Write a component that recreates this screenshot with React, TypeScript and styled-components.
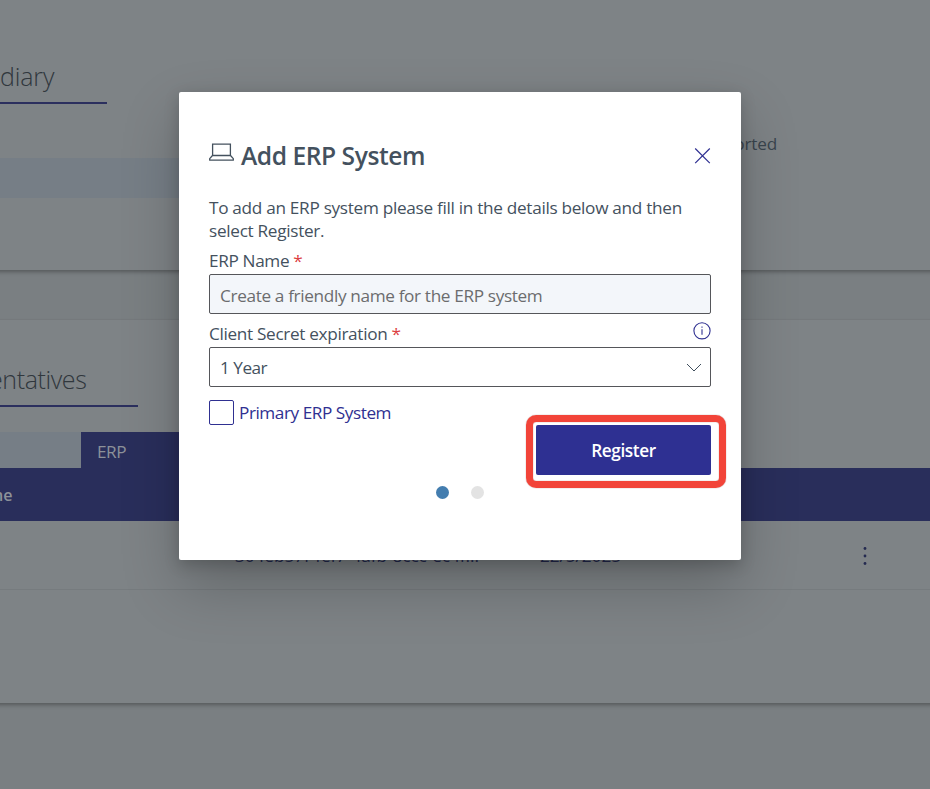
import React from "react";
import styled, { createGlobalStyle } from "styled-components";

const GlobalStyle = createGlobalStyle`
  *, *::before, *::after { box-sizing: border-box; }
  body {
    margin: 0;
    overflow: hidden;
    background: #7a7f82;
    color: #44515e;
    font-family: "Open Sans", "Noto Sans", sans-serif;
    font-size: 17.2px;
  }
`;

const Page = styled.div`
  position: relative;
  width: 930px;
  height: 789px;
  overflow: hidden;
  background: #7a7f82;
`;

const Card = styled.section<{ $height: number; $gap?: number; $border?: boolean }>`
  height: ${(p) => p.$height}px;
  margin: 0 -10px ${(p) => p.$gap ?? 0}px;
  padding: 0 10px;
  background: #7e8386;
  border-top: ${(p) => (p.$border ? "1px solid #75797c" : "0")};
  box-shadow: 0 3px 4px -1px rgba(0, 0, 0, 0.3);
`;

const SectionTitle = styled.h2<{ $width: number; $top: number; $shift?: number; $track: number }>`
  width: ${(p) => p.$width}px;
  height: 44px;
  margin: ${(p) => p.$top}px 0 0;
  text-indent: ${(p) => p.$shift ?? 0}px;
  border-bottom: 2px solid #2b2f5e;
  color: #30373d;
  font-size: 25px;
  font-weight: 300;
  line-height: 32px;
  letter-spacing: ${(p) => p.$track}px;
  white-space: nowrap;
`;

const TitleWrap = styled.div`
  display: flow-root;
`;

const Columns = styled.div`
  display: grid;
  grid-template-columns: 200px 1fr;
  padding-top: 25px;
`;

const Strip = styled.div`
  height: 40px;
  margin-top: 29px;
  background: #767e86;
`;

const ImportState = styled.div`
  justify-self: start;
  width: 577px;
  padding-top: 3px;
  line-height: 24px;
  text-align: right;
  color: #3a454e;
  letter-spacing: -0.2px;
`;

const Tabs = styled.div`
  display: flex;
  height: 36px;
  margin-top: 25px;
`;

const Tab = styled.div<{ $active?: boolean; $width: number }>`
  width: ${(p) => p.$width}px;
  padding-left: 16px;
  line-height: 39px;
  background: ${(p) => (p.$active ? "#292e5b" : "#767e86")};
  color: #8c9199;
  letter-spacing: -0.5px;
`;

const TableHead = styled.div`
  height: 53px;
  background: #292e5b;
  color: #8d9299;
  font-size: 16px;
  font-weight: 600;
  line-height: 54px;
  text-indent: -12px;
`;

const TableRow = styled.div`
  display: grid;
  grid-template-columns: 235px 305px 310px 1fr;
  height: 69px;
  padding-top: 22px;
  border-bottom: 1px solid #767b7e;
  color: #242a50;
  line-height: 25px;
  letter-spacing: -0.05px;
`;

const RowMenu = styled.svg`
  width: 30px;
  height: 24px;
`;

const Dialog = styled.div`
  position: absolute;
  left: 179px;
  top: 92px;
  width: 562px;
  height: 468px;
  padding: 47px 30px 0;
  border-radius: 2px;
  background: #fff;
  box-shadow: 0 25.6px 57.6px rgba(0, 0, 0, 0.22), 0 4.8px 14.4px rgba(0, 0, 0, 0.18);
`;

const DialogHeader = styled.header`
  display: flex;
  height: 32px;
`;

const DialogTitle = styled.h1`
  flex: 1;
  margin: 0 0 0 7px;
  font-size: 24.6px;
  font-weight: 600;
  line-height: 33px;
  letter-spacing: -0.45px;
`;

const LaptopIcon = styled.svg`
  width: 25px;
  height: 20px;
  margin-top: 3px;
`;

const CloseIcon = styled.svg`
  width: 17px;
  height: 17px;
  margin-top: 8px;
`;

const Intro = styled.p`
  margin: 25px 0 0;
  line-height: 23px;
  letter-spacing: -0.3px;
  white-space: nowrap;
`;

const LabelRow = styled.div<{ $top: number; $track: number }>`
  display: flex;
  justify-content: space-between;
  height: 24px;
  margin-top: ${(p) => p.$top}px;
  line-height: 24px;
  letter-spacing: ${(p) => p.$track}px;
`;

const Required = styled.span`
  color: #dc3e42;
`;

const Field = styled.div<{ $filled?: boolean }>`
  display: flex;
  justify-content: space-between;
  height: 40px;
  margin-top: 1px;
  padding: 0 8px 0 10px;
  border: 1px solid #55565a;
  border-radius: 2px;
  background: ${(p) => (p.$filled ? "#f3f6fa" : "#fff")};
  color: ${(p) => (p.$filled ? "#6b6c6e" : "#44515e")};
  line-height: ${(p) => (p.$filled ? 41 : 39)}px;
  letter-spacing: ${(p) => (p.$filled ? -0.35 : -0.5)}px;
`;

const InfoIcon = styled.svg`
  width: 18px;
  height: 18px;
`;

const Chevron = styled.svg`
  width: 16px;
  height: 9px;
  margin-top: 15px;
`;

const CheckRow = styled.label`
  display: flex;
  align-items: center;
  gap: 5px;
  height: 25px;
  margin-top: 13px;
  color: #2f3091;
  letter-spacing: -0.45px;
`;

const CheckBox = styled.span`
  width: 25px;
  height: 25px;
  border: 1px solid #2f3091;
  border-radius: 2px;
`;

const Actions = styled.div`
  display: flex;
  justify-content: flex-end;
`;

const RegisterButton = styled.button`
  position: relative;
  width: 175px;
  height: 50px;
  padding: 1px 0 0;
  border: 0;
  border-radius: 2px;
  background: #2e3092;
  color: #fff;
  font: 600 17.2px "Open Sans", "Noto Sans", sans-serif;
  letter-spacing: -0.4px;

  &::after {
    content: "";
    position: absolute;
    inset: -10px -15px -13px -10px;
    border: 7px solid #f24439;
    border-radius: 10px;
    box-shadow: 0 0 1px #8f5a58, inset 0 0 1px #8f5a58;
  }
`;

const Steps = styled.div`
  display: flex;
  justify-content: center;
  gap: 22px;
  margin-top: 11px;
`;

const Step = styled.span<{ $active?: boolean }>`
  width: 13px;
  height: 13px;
  border-radius: 50%;
  background: ${(p) => (p.$active ? "#437daf" : "#e3e3e3")};
`;

export default function App() {
  return (
    <>
      <GlobalStyle />
      <Page>
        <Card $height={270} $gap={49}>
          <TitleWrap>
            <SectionTitle $width={107} $top={60} $track={-0.15}>diary</SectionTitle>
          </TitleWrap>
          <Columns>
            <Strip />
            <ImportState>Imported</ImportState>
          </Columns>
        </Card>
        <Card $height={384} $border>
          <TitleWrap>
            <SectionTitle $width={138} $top={43} $shift={-11} $track={-0.4}>
              entatives
            </SectionTitle>
          </TitleWrap>
          <Tabs>
            <Tab $width={81} />
            <Tab $width={140} $active>ERP</Tab>
          </Tabs>
          <TableHead>me</TableHead>
          <TableRow>
            <span />
            <span>304eb57f-fef7-4afb-8ccc-ec4f...</span>
            <span>22/5/2025</span>
            <RowMenu viewBox="0 0 30 24" fill="#242a50">
              <circle cx="15" cy="5.5" r="1.4" />
              <circle cx="15" cy="13" r="1.4" />
              <circle cx="15" cy="20.5" r="1.4" />
            </RowMenu>
          </TableRow>
        </Card>

        <Dialog role="dialog">
          <DialogHeader>
            <LaptopIcon viewBox="0 0 25 20" fill="none" stroke="#44515e" strokeWidth="1.3">
              <path d="M3.6 13.5V2.2H21.4V13.5" />
              <path d="M3.5 13.5H21.5L24.3 16.6V18.2H.7V16.6Z" strokeLinejoin="round" />
            </LaptopIcon>
            <DialogTitle>Add ERP System</DialogTitle>
            <CloseIcon viewBox="0 0 17 17" stroke="#2f3091" strokeWidth="1.2">
              <path d="M1.2 1.5L15.8 16.1M15.8 1.5L1.2 16.1" />
            </CloseIcon>
          </DialogHeader>
          <Intro>
            To add an ERP system please fill in the details below and then
            <br />
            select Register.
          </Intro>
          <LabelRow $top={7} $track={-0.35}>
            <span>ERP Name <Required>*</Required></span>
          </LabelRow>
          <Field $filled>Create a friendly name for the ERP system</Field>
          <LabelRow $top={8} $track={-0.33}>
            <span>Client Secret expiration <Required>*</Required></span>
            <InfoIcon viewBox="0 0 18 18" fill="none" stroke="#2f3091" strokeWidth="1.1">
              <circle cx="9" cy="8.8" r="8.1" />
              <path d="M9 7.3V12.8M9 4.5V5.8" />
            </InfoIcon>
          </LabelRow>
          <Field>
            <span>1 Year</span>
            <Chevron viewBox="0 0 16 9" fill="none" stroke="#3f4e5c" strokeWidth="1">
              <path d="M1 1L8 8L15 1" />
            </Chevron>
          </Field>
          <CheckRow>
            <CheckBox />
            Primary ERP System
          </CheckRow>
          <Actions>
            <RegisterButton>Register</RegisterButton>
          </Actions>
          <Steps>
            <Step $active />
            <Step />
          </Steps>
        </Dialog>
      </Page>
    </>
  );
}
